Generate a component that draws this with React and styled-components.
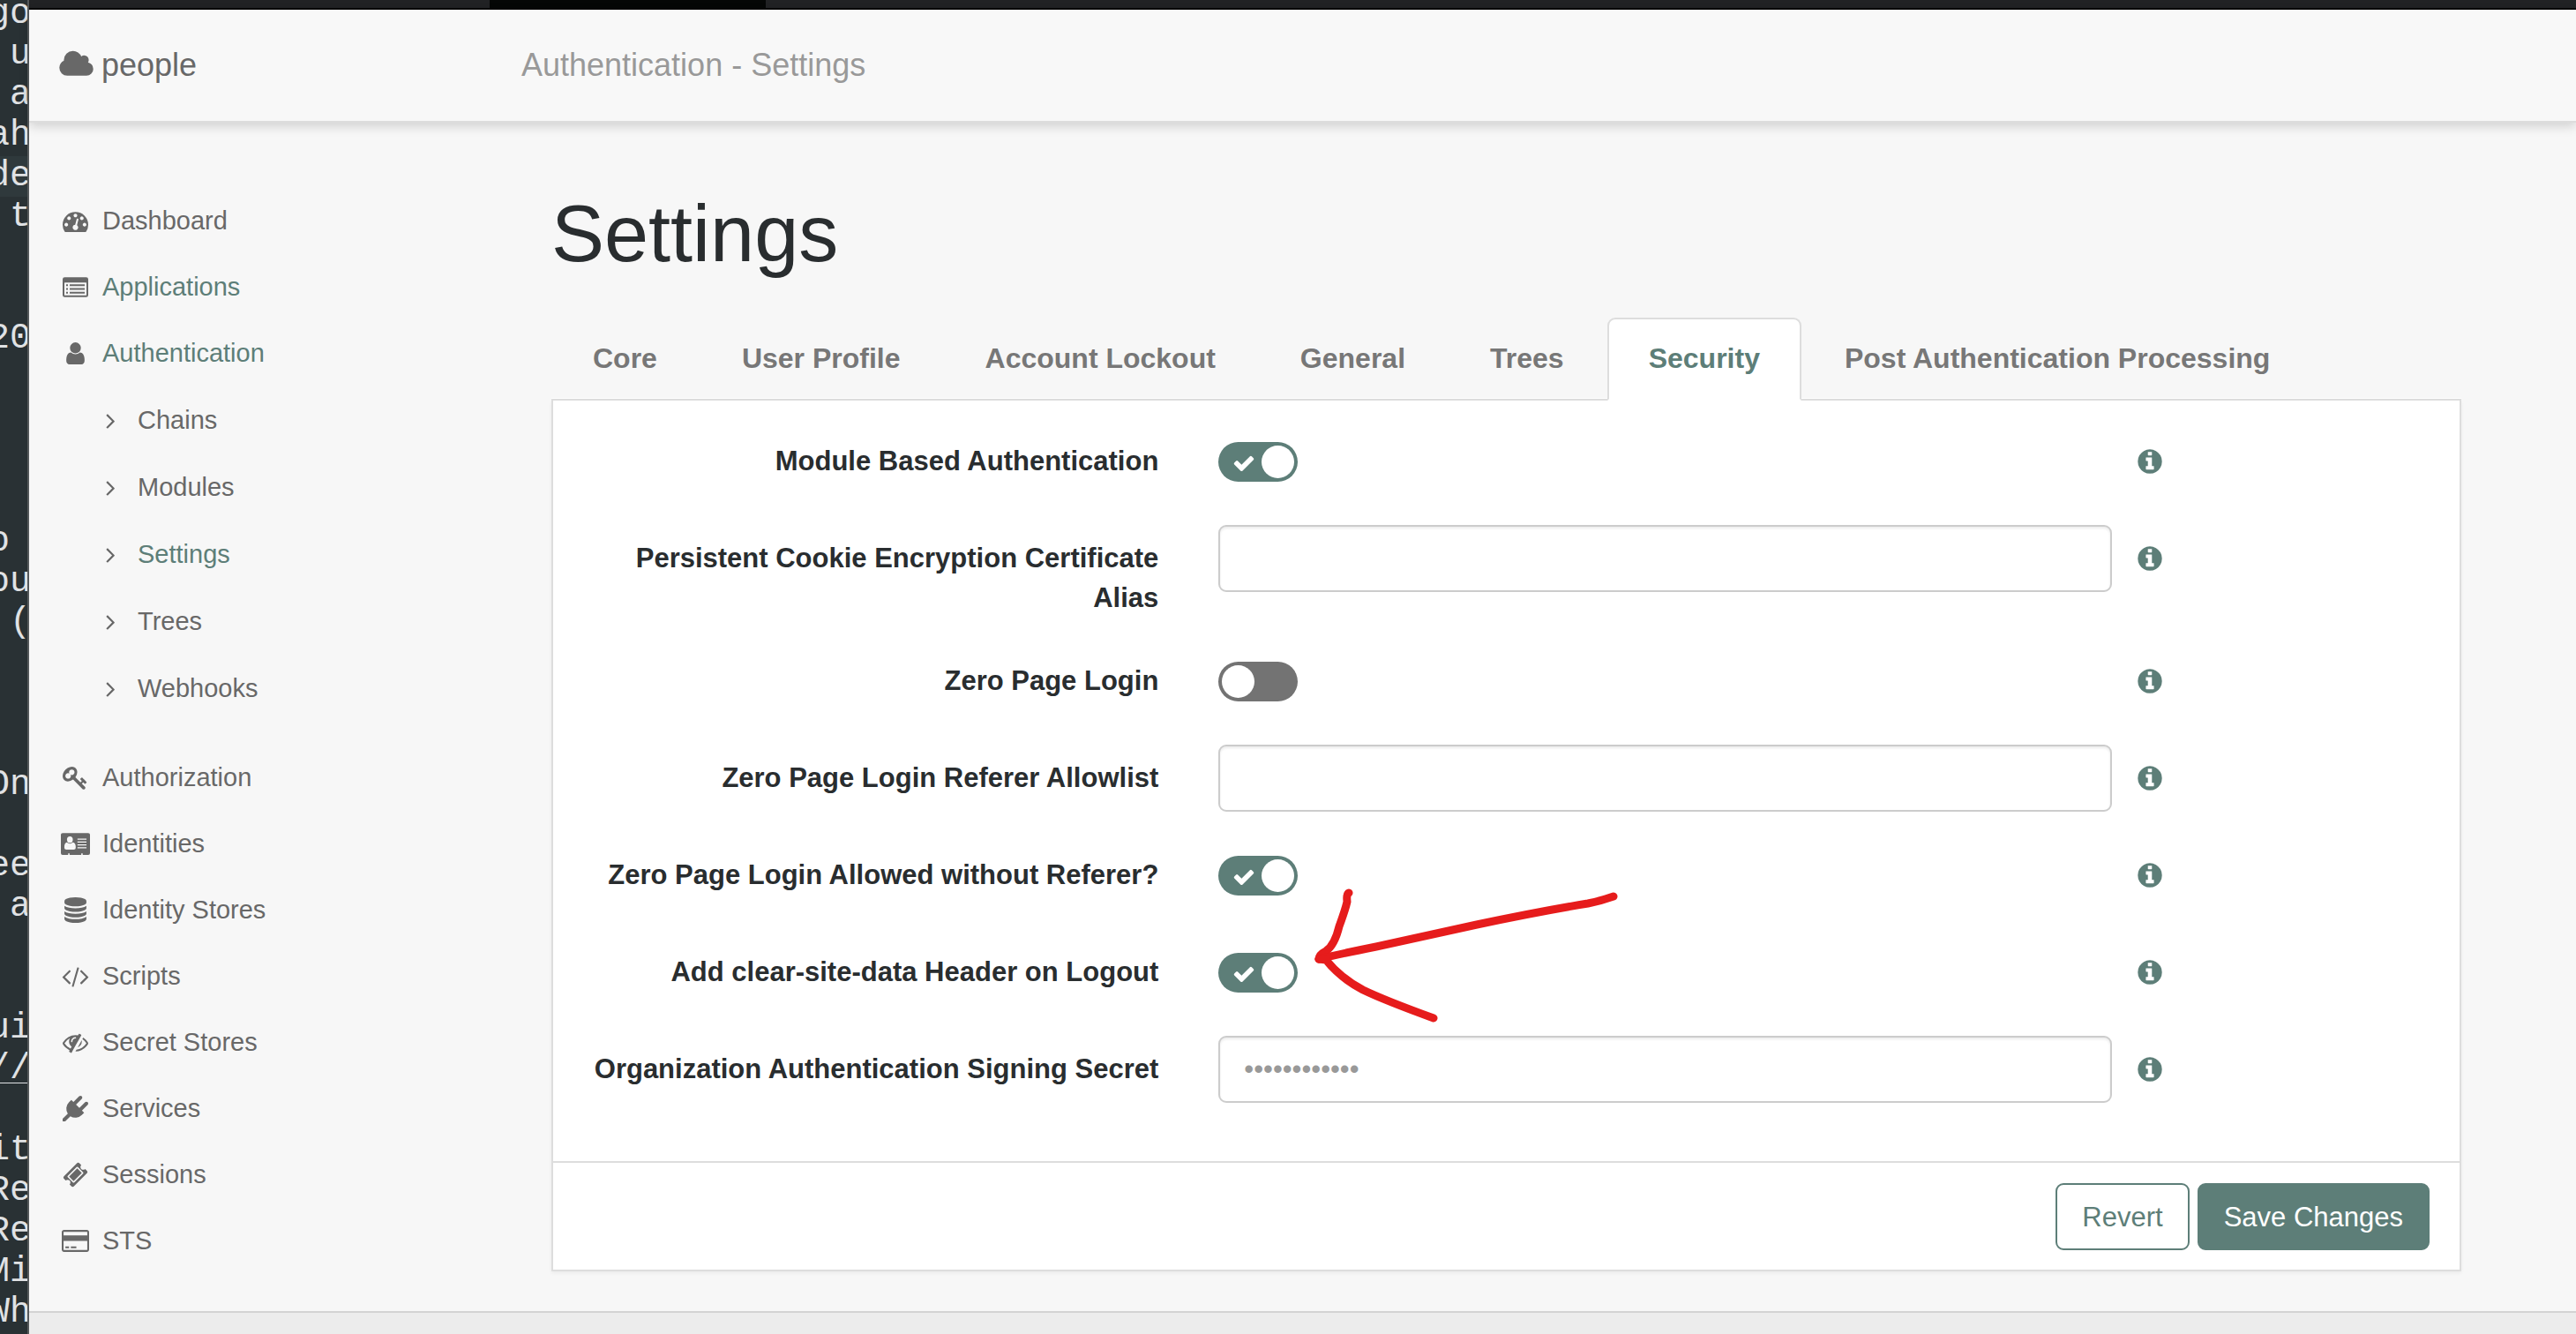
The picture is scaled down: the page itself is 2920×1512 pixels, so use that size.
import React from "react";
import styled, { createGlobalStyle, css } from "styled-components";

const color = {
  page: "#f7f7f7",
  line: "#dddddd",
  accent: "#5d7e78",
  ink: "#292d2f",
  muted: "#686868",
};

const Global = createGlobalStyle`
  *, *::before, *::after { box-sizing: border-box; }
  body {
    margin: 0;
    background: #293134;
    color: ${color.ink};
    font: 31px/45px "Liberation Sans", Arial, Helvetica, sans-serif;
  }
  ul { list-style: none; margin: 0; padding: 0; }
  a { color: inherit; text-decoration: none; }
  button, input { font: inherit; }
`;

const Desktop = styled.div`
  display: flex;
  min-height: 100vh;
`;

/* ---------- editor behind the window ---------- */

const Editor = styled.aside`
  flex: none;
  width: 33px;
  height: 100vh;
  overflow: hidden;
  background: #293134;
  border-right: 2px solid #55595b;
`;

const EditorLines = styled.div`
  margin: -7px 0 0 -13px;
  color: #e0e2e4;
  font: 40px/46px "Liberation Mono", "Courier New", monospace;
`;

const EditorLine = styled.div`
  height: 46px;
  white-space: pre;
  background: ${(p) => (p.$current ? "#2f393c" : "transparent")};
  text-decoration: ${(p) => (p.$underlined ? "underline 1px" : "none")};
  text-underline-offset: 5px;
  text-decoration-skip-ink: none;
`;

const editorText = [
  "go", " u", " a", "ah", "de", " t", "", "", "20", "", "", "", "", "o ", "ou", " (", "",
  "", "", "On", "", "ee", " a", "", "", "ui", "//", "", "it", "Re", "Re", "Mi", "Wh",
];

/* ---------- browser window ---------- */

const Window = styled.div`
  flex: 1;
  min-width: 0;
  display: flex;
  flex-direction: column;
  background: ${color.page};
`;

const TabStrip = styled.div`
  height: 11px;
  padding-left: 522px;
  background: #212224;
  border-bottom: 2px solid #020202;
`;

const StripTab = styled.div`
  width: 313px;
  height: 9px;
  background: #050706;
`;

const Header = styled.header`
  position: relative;
  z-index: 1;
  display: flex;
  align-items: center;
  height: 128px;
  padding: 0 34px 2px 33px;
  background: #f8f8f8;
  border-bottom: 2px solid ${color.line};
  box-shadow: 0 4px 12px rgba(0, 0, 0, 0.16);
  font-size: 36px;
`;

const Brand = styled.a`
  display: flex;
  align-items: center;
  gap: 8px;
  width: 525px;
  color: ${color.muted};
`;

const Crumb = styled.span`
  color: #999;
`;

const Content = styled.div`
  display: flex;
`;

const Sidebar = styled.nav`
  flex: none;
  width: 559px;
  padding: 74px 0 0 34px;
  color: ${color.muted};
  font-size: 29px;
`;

const SubList = styled.ul`
  padding: 0 0 26px 40px;
`;

const NavLink = styled.a`
  display: flex;
  align-items: center;
  gap: 12px;
  height: ${(p) => (p.$sub ? "76px" : "75px")};
`;

const NavText = styled.span`
  color: ${(p) => (p.$active ? color.accent : "inherit")};
`;

const IconSlot = styled.span`
  display: flex;
  justify-content: center;
  flex: none;
  width: 37px;
`;

const Main = styled.main`
  flex: 1;
  min-width: 0;
  padding: 77px 130px 45px 33px;
`;

const Title = styled.h1`
  margin: 0 0 45px;
  font-size: 90px;
  line-height: 99px;
  font-weight: 400;
`;

const Tabs = styled.div`
  display: flex;
  gap: 2px;
  border-bottom: 2px solid ${color.line};
  box-shadow: inset 0 -1px #fff;
`;

const Tab = styled.button`
  margin: 0 0 -2px;
  padding: 22px 45px 23px;
  border: 2px solid transparent;
  border-radius: 9px 9px 0 0;
  background: transparent;
  color: #777;
  font-size: 32px;
  font-weight: 700;
  white-space: nowrap;
  cursor: pointer;
  ${(p) =>
    p.$active &&
    css`
      border-color: ${color.line} ${color.line} #fff;
      background: #fff;
      color: ${color.accent};
    `}
`;

const Card = styled.form`
  background: #fff;
  border: 2px solid ${color.line};
  border-top: 0;
  box-shadow: 0 2px 4px rgba(0, 0, 0, 0.05);
`;

const CardBody = styled.div`
  padding: 31px 0 32px;
`;

const Row = styled.div`
  display: grid;
  grid-template-columns: 4fr 6fr 2fr;
  align-items: start;
  min-height: 76px;
  margin-bottom: 34px;
`;

const Label = styled.label`
  padding: 15px 34px 0;
  font-weight: 700;
  text-align: right;
`;

const Control = styled.div`
  position: relative;
  padding: ${(p) => (p.$toggle ? "16px" : "0")} 34px 0;
`;

const TextInput = styled.input`
  display: block;
  width: 100%;
  height: 76px;
  padding: 0 27px;
  border: 2px solid #ccc;
  border-radius: 9px;
  background: #fff;
  box-shadow: inset 0 2px 3px rgba(0, 0, 0, 0.08);
  color: #555;
  outline: 0;
  &::placeholder {
    color: #999;
    opacity: 1;
  }
`;

const Switch = styled.span`
  position: relative;
  display: block;
  width: 90px;
  height: 45px;
  & > svg {
    position: absolute;
    top: 11px;
    left: 16px;
    pointer-events: none;
  }
`;

const SwitchInput = styled.input`
  appearance: none;
  display: flex;
  width: 90px;
  height: 45px;
  margin: 0;
  padding: 4px;
  border-radius: 23px;
  background: #737373;
  cursor: pointer;
  &::after {
    content: "";
    width: 37px;
    height: 37px;
    border-radius: 50%;
    background: #fff;
  }
  &:checked {
    justify-content: flex-end;
    background: ${color.accent};
  }
`;

const Help = styled.button`
  display: flex;
  align-items: center;
  justify-self: start;
  height: 76px;
  margin-left: -7px;
  padding: 0;
  border: 0;
  background: none;
  color: ${color.accent};
  cursor: pointer;
`;

const CardFooter = styled.div`
  display: flex;
  justify-content: flex-end;
  gap: 9px;
  padding: 23px 34px 22px;
  border-top: 2px solid ${color.line};
`;

const Button = styled.button`
  height: 76px;
  padding: 0 28px;
  border: 2px solid ${color.accent};
  border-radius: 9px;
  background: ${(p) => (p.$primary ? color.accent : "#fff")};
  color: ${(p) => (p.$primary ? "#fff" : color.accent)};
  cursor: pointer;
`;

const PageFooter = styled.footer`
  flex: 1;
  background: #ececec;
  border-top: 2px solid #d3d3d3;
`;

const Arrow = styled.svg`
  position: absolute;
  top: -60px;
  left: 138px;
  pointer-events: none;
`;

/* ---------- icons ---------- */

const glyphs = {
  cloud: [2048, "M1984 1152q0 159-112.5 271.5t-271.5 112.5h-1088q-185 0-316.5-131.5t-131.5-316.5q0-132 71-241.5t187-163.5q-2-28-2-43 0-212 150-362t362-150q158 0 286.5 88t187.5 230q70-62 166-62 106 0 181 75t75 181q0 75-41 138 129 30 213 134.5t84 239.5z"],
  gauge: [1792, "M384 1152q0-53-37.5-90.5t-90.5-37.5-90.5 37.5-37.5 90.5 37.5 90.5 90.5 37.5 90.5-37.5 37.5-90.5zm192-448q0-53-37.5-90.5t-90.5-37.5-90.5 37.5-37.5 90.5 37.5 90.5 90.5 37.5 90.5-37.5 37.5-90.5zm428 481l101-382q6-26-7.5-48.5t-38.5-29.5-48 6.5-30 39.5l-101 382q-60 5-107 43.5t-63 98.5q-20 77 20 146t117 89 146-20 89-117q16-60-6-117t-72-91zm660-33q0-53-37.5-90.5t-90.5-37.5-90.5 37.5-37.5 90.5 37.5 90.5 90.5 37.5 90.5-37.5 37.5-90.5zm-640-640q0-53-37.5-90.5t-90.5-37.5-90.5 37.5-37.5 90.5 37.5 90.5 90.5 37.5 90.5-37.5 37.5-90.5zm448 192q0-53-37.5-90.5t-90.5-37.5-90.5 37.5-37.5 90.5 37.5 90.5 90.5 37.5 90.5-37.5 37.5-90.5zm320 448q0 261-141 483-19 29-54 29h-1402q-35 0-54-29-141-221-141-483 0-182 71-348t191-286 286-191 348-71 348 71 286 191 191 286 71 348z"],
  user: [1792, "M1536 1399q0 109-62.5 187t-150.5 78h-854q-88 0-150.5-78t-62.5-187q0-85 8.5-160.5t31.5-152 58.5-131 94-89 134.5-34.5q131 128 313 128t313-128q76 0 134.5 34.5t94 89 58.5 131 31.5 152 8.5 160.5zm-256-887q0 159-112.5 271.5t-271.5 112.5-271.5-112.5-112.5-271.5 112.5-271.5 271.5-112.5 271.5 112.5 112.5 271.5z"],
  angle: [1792, "M1171 960q0 13-10 23l-466 466q-10 10-23 10t-23-10l-50-50q-10-10-10-23t10-23l393-393-393-393q-10-10-10-23t10-23l50-50q10-10 23-10t23 10l466 466q10 10 10 23z"],
  key: [1792, "M832 512q0-80-56-136t-136-56-136 56-56 136q0 42 19 83-41-19-83-19-80 0-136 56t-56 136 56 136 136 56 136-56 56-136q0-42-19-83 41 19 83 19 80 0 136-56t56-136zm851 704q0 17-49 66t-66 49q-9 0-28.5-16t-36.5-33-38.5-40-24.5-26l-96 96 220 220q28 28 28 68 0 42-39 81t-81 39q-40 0-68-28l-671-671q-176 131-365 131-163 0-265.5-102.5t-102.5-265.5q0-160 95-313t248-248 313-95q163 0 265.5 102.5t102.5 265.5q0 189-131 365l355 355 96-96q-3-3-26-24.5t-40-38.5-33-36.5-16-28.5q0-17 49-66t66-49q13 0 23 10 6 6 46 44.5t82 79.5 86.5 86 73 78 28.5 41z"],
  database: [1792, "M896 768q237 0 443-43t325-127v170q0 69-103 128t-280 93.5-385 34.5-385-34.5-280-93.5-103-128v-170q119 84 325 127t443 43zm0 768q237 0 443-43t325-127v170q0 69-103 128t-280 93.5-385 34.5-385-34.5-280-93.5-103-128v-170q119 84 325 127t443 43zm0-384q237 0 443-43t325-127v170q0 69-103 128t-280 93.5-385 34.5-385-34.5-280-93.5-103-128v-170q119 84 325 127t443 43zm0-1152q208 0 385 34.5t280 93.5 103 128v128q0 69-103 128t-280 93.5-385 34.5-385-34.5-280-93.5-103-128v-128q0-69 103-128t280-93.5 385-34.5z"],
  code: [2048, "M681 1399l-50 50q-10 10-23 10t-23-10l-466-466q-10-10-10-23t10-23l466-466q10-10 23-10t23 10l50 50q10 10 10 23t-10 23l-393 393 393 393q10 10 10 23t-10 23zm591-1067l-373 1291q-4 13-15.5 19.5t-23.5 2.5l-62-17q-13-4-19.5-15.5t-2.5-24.5l373-1291q4-13 15.5-19.5t23.5-2.5l62 17q13 4 19.5 15.5t2.5 24.5zm657 651l-466 466q-10 10-23 10t-23-10l-50-50q-10-10-10-23t10-23l393-393-393-393q-10-10-10-23t10-23l50-50q10-10 23-10t23 10l466 466q10 10 10 23t-10 23z"],
  eyeSlash: [1792, "M555 1335l78-141q-87-63-136-159t-49-203q0-121 61-225-229 117-381 353 167 258 427 375zm389-759q0-20-14-34t-34-14q-125 0-214.5 89.5t-89.5 214.5q0 20 14 34t34 14 34-14 14-34q0-86 61-147t147-61q20 0 34-14t14-34zm363-191q0 7-1 9-106 189-316 567t-315 566l-49 89q-10 16-28 16-12 0-134-70-16-10-16-28 0-12 44-87-143-65-263.5-173t-208.5-245q-20-31-20-69t20-69q153-235 380-371t496-136q89 0 180 17l54-97q10-16 28-16 5 0 18 6t31 15.5 33 18.5 31.5 18.5 19.5 11.5q16 10 16 27zm37 447q0 139-79 253.5t-209 164.5l280-502q8 45 8 84zm448 128q0 35-20 69-39 64-109 145-150 172-347.5 267t-419.5 95l74-132q212-18 392.5-137t301.5-307q-115-179-282-294l63-112q95 64 182.5 153t144.5 184q20 34 20 69z"],
  plug: [1792, "M1755 453q37 38 37 90.5t-37 90.5l-401 400 150 150-160 160q-163 163-389.5 186.5t-411.5-100.5l-362 362h-181v-181l362-362q-124-185-100.5-411.5t186.5-389.5l160-160 150 150 400-401q38-37 91-37t90 37 37 90.5-37 90.5l-400 401 234 234 401-400q38-37 91-37t90 37z"],
  ticket: [1792, "M1024 452l316 316-572 572-316-316zm-211 979l618-618q19-19 19-45t-19-45l-362-362q-18-18-45-18t-45 18l-618 618q-19 19-19 45t19 45l362 362q18 18 45 18t45-18zm889-637l-907 908q-37 37-90.5 37t-90.5-37l-126-126q56-56 56-136t-56-136-136-56-136 56l-125-126q-37-37-37-90.5t37-90.5l907-906q37-37 90.5-37t90.5 37l125 125q-56 56-56 136t56 136 136 56 136-56l126 125q37 37 37 90.5t-37 90.5z"],
  card: [1920, "M1760 128q66 0 113 47t47 113v1216q0 66-47 113t-113 47h-1600q-66 0-113-47t-47-113v-1216q0-66 47-113t113-47h1600zm-1600 128q-13 0-22.5 9.5t-9.5 22.5v224h1664v-224q0-13-9.5-22.5t-22.5-9.5h-1600zm1600 1280q13 0 22.5-9.5t9.5-22.5v-608h-1664v608q0 13 9.5 22.5t22.5 9.5h1600zm-1504-128v-128h256v128h-256zm384 0v-128h384v128h-384z"],
  info: [1792, "M1152 1376v-160q0-14-9-23t-23-9h-96v-512q0-14-9-23t-23-9h-320q-14 0-23 9t-9 23v160q0 14 9 23t23 9h96v320h-96q-14 0-23 9t-9 23v160q0 14 9 23t23 9h448q14 0 23-9t9-23zm-128-896v-160q0-14-9-23t-23-9h-192q-14 0-23 9t-9 23v160q0 14 9 23t23 9h192q14 0 23-9t9-23zm640 416q0 209-103 385.5t-279.5 279.5-385.5 103-385.5-103-279.5-279.5-103-385.5 103-385.5 279.5-279.5 385.5-103 385.5 103 279.5 279.5 103 385.5z"],
  check: [1792, "M1671 566q0 40-28 68l-724 724-136 136q-28 28-68 28t-68-28l-136-136-362-362q-28-28-28-68t28-68l136-136q28-28 68-28t68 28l294 295 656-657q28-28 68-28t68 28l136 136q28 28 28 68z"],
};

function Icon({ name, size = 29, fill = "currentColor" }) {
  if (name === "list") {
    return (
      <svg width="29" height="23" viewBox="0 0 87 68" fill={color.muted} aria-hidden="true">
        <path
          fillRule="evenodd"
          d="M7 0h73q7 0 7 7v54q0 7-7 7H7q-7 0-7-7V7q0-7 7-7zM8 18q-2 0-2 2v40q0 2 2 2h71q2 0 2-2V20q0-2-2-2z"
        />
        <path d="M12 24h6v6h-6zM24 24h51v6H24zM12 37h6v6h-6zM24 37h51v6H24zM12 50h6v6h-6zM24 50h51v6H24z" />
      </svg>
    );
  }
  if (name === "idCard") {
    return (
      <svg width="33" height="25" viewBox="0 0 100 75" aria-hidden="true">
        <rect width="100" height="75" rx="6" fill={color.muted} />
        <g fill={color.page}>
          <ellipse cx="31" cy="23" rx="10" ry="11" />
          <path d="M20 32q11 9 22 0 10 3 9 19 0 6-7 6H19q-7 0-7-6-1-16 8-19z" />
          <path d="M57 19h31v4H57zM57 29h31v4H57zM57 39h31v4H57zM57 49h31v4H57zM25 70h5v5h-5zM70 70h5v5h-5z" />
        </g>
      </svg>
    );
  }
  const [w, d] = glyphs[name];
  return (
    <svg width={Math.round((w / 1792) * size)} height={size} viewBox={`0 0 ${w} 1792`} fill={fill} aria-hidden="true">
      <path d={d} />
    </svg>
  );
}

/* ---------- data ---------- */

const topNav = [
  { text: "Dashboard", icon: "gauge" },
  { text: "Applications", icon: "list", active: true },
  { text: "Authentication", icon: "user", active: true },
];
const subNav = ["Chains", "Modules", "Settings", "Trees", "Webhooks"];
const bottomNav = [
  { text: "Authorization", icon: "key" },
  { text: "Identities", icon: "idCard" },
  { text: "Identity Stores", icon: "database" },
  { text: "Scripts", icon: "code" },
  { text: "Secret Stores", icon: "eyeSlash" },
  { text: "Services", icon: "plug" },
  { text: "Sessions", icon: "ticket" },
  { text: "STS", icon: "card" },
];
const tabs = ["Core", "User Profile", "Account Lockout", "General", "Trees", "Security", "Post Authentication Processing"];
const fields = [
  { id: "module-auth", label: "Module Based Authentication", type: "toggle", on: true },
  { id: "cookie-alias", label: "Persistent Cookie Encryption Certificate Alias", type: "text" },
  { id: "zero-page", label: "Zero Page Login", type: "toggle", on: false },
  { id: "referer-list", label: "Zero Page Login Referer Allowlist", type: "text" },
  { id: "no-referer", label: "Zero Page Login Allowed without Referer?", type: "toggle", on: true },
  { id: "clear-site", label: "Add clear-site-data Header on Logout", type: "toggle", on: true, marked: true },
  { id: "secret", label: "Organization Authentication Signing Secret", type: "password", placeholder: "••••••••••••" },
];

function NavItem({ text, icon, active, sub }) {
  return (
    <NavLink href="#" $sub={sub}>
      <IconSlot>
        <Icon name={icon} />
      </IconSlot>
      <NavText $active={active}>{text}</NavText>
    </NavLink>
  );
}

function Toggle({ id, on }) {
  const [checked, setChecked] = React.useState(on);
  return (
    <Switch>
      <SwitchInput id={id} type="checkbox" checked={checked} onChange={(e) => setChecked(e.target.checked)} />
      {checked && <Icon name="check" size={26} fill="#fff" />}
    </Switch>
  );
}

function RedArrow() {
  return (
    <Arrow width="360" height="170" viewBox="1485 1003 360 170" fill="none" stroke="#e61c1c" strokeWidth="9" strokeLinecap="round" strokeLinejoin="round" aria-hidden="true">
      <path d="M1529 1011Q1526 1012 1527 1021Q1525 1030 1518 1049Q1513 1070 1503 1077Q1495 1081 1495 1086" />
      <path d="M1495 1086Q1520 1080 1560 1072L1674 1047Q1745 1032 1800 1023Q1815 1020 1829 1015" />
      <path d="M1495 1086L1503 1087Q1520 1108 1545 1121Q1570 1133 1625 1153" />
    </Arrow>
  );
}

export default function App() {
  return (
    <Desktop>
      <Global />
      <Editor aria-hidden="true">
        <EditorLines>
          {editorText.map((line, i) => (
            <EditorLine key={i} $current={i === 4} $underlined={line === "//"}>
              {line}
            </EditorLine>
          ))}
        </EditorLines>
      </Editor>
      <Window>
        <TabStrip>
          <StripTab />
        </TabStrip>
        <Header>
          <Brand href="#">
            <Icon name="cloud" size={36} />
            people
          </Brand>
          <Crumb>Authentication - Settings</Crumb>
        </Header>
        <Content>
          <Sidebar>
            <ul>
              {topNav.map((item) => (
                <li key={item.text}>
                  <NavItem {...item} />
                </li>
              ))}
            </ul>
            <SubList>
              {subNav.map((text) => (
                <li key={text}>
                  <NavItem text={text} icon="angle" active={text === "Settings"} sub />
                </li>
              ))}
            </SubList>
            <ul>
              {bottomNav.map((item) => (
                <li key={item.text}>
                  <NavItem {...item} />
                </li>
              ))}
            </ul>
          </Sidebar>
          <Main>
            <Title>Settings</Title>
            <Tabs role="tablist">
              {tabs.map((tab) => (
                <Tab key={tab} type="button" role="tab" aria-selected={tab === "Security"} $active={tab === "Security"}>
                  {tab}
                </Tab>
              ))}
            </Tabs>
            <Card onSubmit={(e) => e.preventDefault()}>
              <CardBody>
                {fields.map((f) => (
                  <Row key={f.id}>
                    <Label htmlFor={f.id}>{f.label}</Label>
                    <Control $toggle={f.type === "toggle"}>
                      {f.type === "toggle" ? (
                        <Toggle id={f.id} on={f.on} />
                      ) : (
                        <TextInput id={f.id} type={f.type} placeholder={f.placeholder} autoComplete="off" />
                      )}
                      {f.marked && <RedArrow />}
                    </Control>
                    <Help type="button" aria-label={`About ${f.label}`}>
                      <Icon name="info" size={32} />
                    </Help>
                  </Row>
                ))}
              </CardBody>
              <CardFooter>
                <Button type="button">Revert</Button>
                <Button type="submit" $primary>
                  Save Changes
                </Button>
              </CardFooter>
            </Card>
          </Main>
        </Content>
        <PageFooter />
      </Window>
    </Desktop>
  );
}
